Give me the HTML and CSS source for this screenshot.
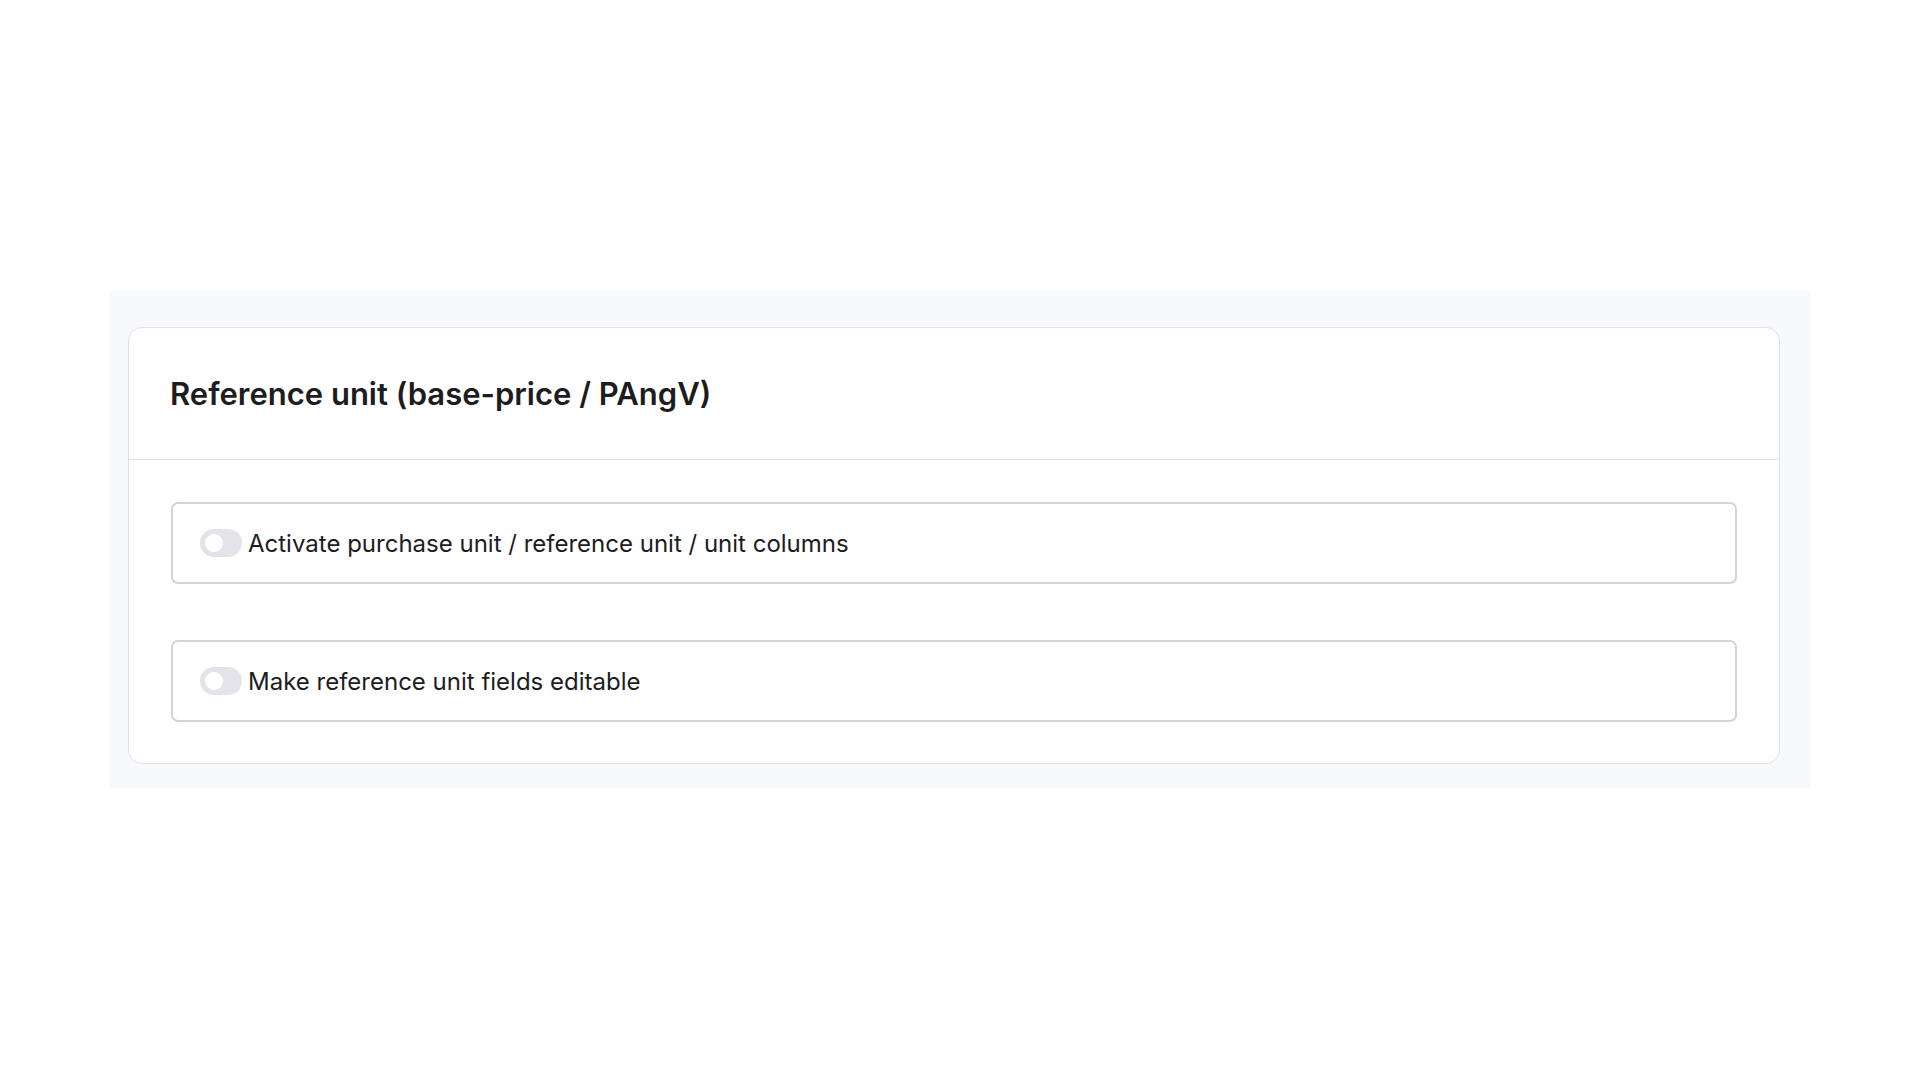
FILE: index.html
```html
<!DOCTYPE html>
<html lang="en">
<head>
    <meta charset="UTF-8">
    <meta name="viewport" content="width=device-width, initial-scale=1.0">
    <title>Reference unit settings</title>
    <link rel="stylesheet" href="styles.css">
</head>
<body>

    <div class="page">
        <!-- Settings panel -->
        <section class="panel">
            <div class="card">
                <header class="card-header">
                    <h2>Reference unit (base-price / PAngV)</h2>
                </header>

                <div class="card-body">
                    <label class="option">
                        <span class="toggle"><span class="knob"></span></span>
                        <span class="option-label">Activate purchase unit / reference unit / unit columns</span>
                    </label>

                    <label class="option">
                        <span class="toggle"><span class="knob"></span></span>
                        <span class="option-label">Make reference unit fields editable</span>
                    </label>
                </div>
            </div>
        </section>
    </div>

</body>
</html>
```

FILE: styles.css
```css
/* General Page Styling */
body {
    font-family: Inter, 'Noto Sans', sans-serif;
    margin: 0;
    padding: 0;
    background: #FFFFFF;
    color: #1F1F24;
}

.page {
    padding: 290px 110px 0 110px;
}

/* Outer tinted panel */
.panel {
    background-color: #F8F9FD;
    padding: 37px 30px 24px 18px;
}

/* Card */
.card {
    background-color: #FFFFFF;
    border: 1px solid #E1E1E7;
    border-radius: 14px;
}

.card-header {
    height: 131px;
    display: flex;
    align-items: center;
    padding: 0 41px;
    border-bottom: 1px solid #E1E1E7;
}

.card-header h2 {
    margin: 0;
    font-size: 31px;
    font-weight: 600;
    color: #1C1C21;
}

.card-body {
    display: flex;
    flex-direction: column;
    gap: 56px;
    padding: 42px 42px 41px 42px;
}

/* Toggle rows */
.option {
    display: flex;
    align-items: center;
    gap: 6px;
    height: 78px;
    padding: 0 27px;
    border: 2px solid #D4D4D8;
    border-radius: 7px;
    cursor: pointer;
}

.toggle {
    position: relative;
    width: 42px;
    height: 28px;
    border-radius: 14px;
    background-color: #E3E3E9;
    flex-shrink: 0;
}

.knob {
    position: absolute;
    top: 5px;
    left: 5px;
    width: 18px;
    height: 18px;
    border-radius: 50%;
    background-color: #FFFFFF;
}

.option-label {
    font-size: 24px;
    color: #1C1C21;
}
```
